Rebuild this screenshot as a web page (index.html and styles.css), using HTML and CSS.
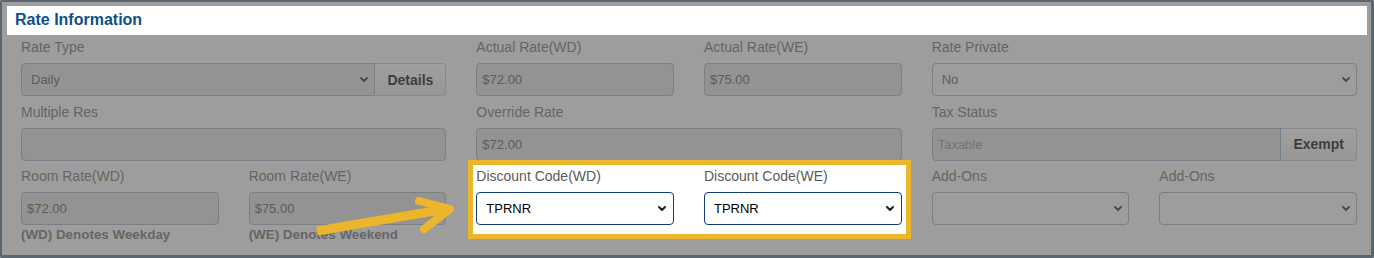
FILE: index.html
```html
<!DOCTYPE html>
<html>
<head>
<meta charset="utf-8">
<link rel="stylesheet" href="styles.css">
</head>
<body>
<div class="frame">
  <div class="header">Rate Information</div>
  <div class="grid">
    <div class="field span2">
      <div class="lbl">Rate Type</div>
      <div class="group">
        <div class="control select dim grow left"><span class="val">Daily</span><svg class="chev" width="8" height="5" viewBox="0 0 8 5"><polyline points="1,1 4,4 7,1" /></svg></div>
        <div class="btn">Details</div>
      </div>
    </div>
    <div class="field">
      <div class="lbl">Actual Rate(WD)</div>
      <div class="control dim tight"><span class="val">$72.00</span></div>
    </div>
    <div class="field">
      <div class="lbl">Actual Rate(WE)</div>
      <div class="control dim tight"><span class="val">$75.00</span></div>
    </div>
    <div class="field span2">
      <div class="lbl">Rate Private</div>
      <div class="control select"><span class="val">No</span><svg class="chev" width="8" height="5" viewBox="0 0 8 5"><polyline points="1,1 4,4 7,1" /></svg></div>
    </div>

    <div class="field span2">
      <div class="lbl">Multiple Res</div>
      <div class="control dim"></div>
    </div>
    <div class="field span2">
      <div class="lbl">Override Rate</div>
      <div class="control dim tight"><span class="val">$72.00</span></div>
    </div>
    <div class="field span2">
      <div class="lbl">Tax Status</div>
      <div class="group">
        <div class="control dim grow left tight"><span class="val light">Taxable</span></div>
        <div class="btn">Exempt</div>
      </div>
    </div>

    <div class="field">
      <div class="lbl">Room Rate(WD)</div>
      <div class="control dim tight"><span class="val">$72.00</span></div>
      <div class="note">(WD) Denotes Weekday</div>
    </div>
    <div class="field">
      <div class="lbl">Room Rate(WE)</div>
      <div class="control dim tight"><span class="val">$75.00</span></div>
      <div class="note">(WE) Denotes Weekend</div>
    </div>
    <div class="highlight">
      <div class="field">
        <div class="lbl hl">Discount Code(WD)</div>
        <div class="control select active"><span class="val">TPRNR</span><svg class="chev" width="8" height="5" viewBox="0 0 8 5"><polyline points="1,1 4,4 7,1" /></svg></div>
      </div>
      <div class="field">
        <div class="lbl hl">Discount Code(WE)</div>
        <div class="control select active"><span class="val">TPRNR</span><svg class="chev" width="8" height="5" viewBox="0 0 8 5"><polyline points="1,1 4,4 7,1" /></svg></div>
      </div>
    </div>
    <div class="field">
      <div class="lbl">Add-Ons</div>
      <div class="control select"><span class="val"></span><svg class="chev" width="8" height="5" viewBox="0 0 8 5"><polyline points="1,1 4,4 7,1" /></svg></div>
    </div>
    <div class="field">
      <div class="lbl">Add-Ons</div>
      <div class="control select"><span class="val"></span><svg class="chev" width="8" height="5" viewBox="0 0 8 5"><polyline points="1,1 4,4 7,1" /></svg></div>
    </div>
  </div>
  <svg class="arrow" width="150" height="45" viewBox="0 0 150 45">
    <line class="shaft" x1="7" y1="38" x2="136" y2="16" />
    <polyline class="head" points="109,8 140,16 114,36" />
  </svg>
</div>
</body>
</html>
```

FILE: styles.css
```css
* { box-sizing: border-box; }

html, body {
  margin: 0;
  padding: 0;
}

body {
  width: 1374px;
  height: 258px;
  font-family: "Liberation Sans", Arial, sans-serif;
  background: #9d9d9d;
}

.frame {
  position: relative;
  width: 1374px;
  height: 258px;
  border-style: solid;
  border-color: #5b6770;
  border-width: 2px 3px 3px 2px;
  border-radius: 2px;
  background: #9d9d9d;
  padding: 4px 4px 0 5px;
}

.header {
  height: 29px;
  background: #ffffff;
  color: #0e4f8c;
  font-weight: bold;
  font-size: 16px;
  line-height: 28px;
  padding-left: 8px;
}

.grid {
  display: grid;
  grid-template-columns: repeat(6, minmax(0, 1fr));
  column-gap: 30px;
  row-gap: 7.5px;
  padding: 4px 10px 0 14px;
  align-items: start;
}

.span2 { grid-column: span 2; }

.field {
  display: flex;
  flex-direction: column;
  min-width: 0;
}

.lbl {
  font-size: 14px;
  line-height: 17px;
  color: #656565;
  margin-bottom: 7px;
  white-space: nowrap;
}

.lbl.hl { color: #5a5a5a; }

.group {
  display: flex;
}

.grow { flex: 1 1 auto; min-width: 0; }

.control {
  height: 33px;
  border: 1px solid #7b7f88;
  border-radius: 4px;
  background: #9d9d9d;
  display: flex;
  align-items: center;
  padding: 0 9px;
  font-size: 13px;
  color: #5c5c5c;
}

.control.tight { padding-left: 5px; }

.control.dim { background: #939393; }

.control.left {
  border-top-right-radius: 0;
  border-bottom-right-radius: 0;
}

.val {
  flex: 1 1 auto;
  white-space: nowrap;
}

.val.light { color: #747474; }

.select { padding-right: 6px; }

.chev {
  flex: 0 0 auto;
  fill: none;
  stroke: #4a4a4a;
  stroke-width: 1.8;
  stroke-linecap: round;
  stroke-linejoin: round;
}

.btn {
  height: 33px;
  flex: 0 0 auto;
  border: 1px solid #878a8f;
  border-left: none;
  border-radius: 0 4px 4px 0;
  background: linear-gradient(#a0a0a0, #969696);
  font-size: 14px;
  font-weight: bold;
  color: #3e3e3e;
  display: flex;
  align-items: center;
  padding: 0 12px 0 12px;
}

.note {
  margin-top: 2px;
  font-size: 13.4px;
  line-height: 15px;
  font-weight: bold;
  color: #666666;
  white-space: nowrap;
}

.highlight {
  grid-column: span 2;
  margin: -8px -9px -14px -8px;
  border: 5px solid #ebb62c;
  background: #ffffff;
  padding: 3px 4px 9px 3px;
  display: grid;
  grid-template-columns: repeat(2, minmax(0, 1fr));
  column-gap: 30px;
}

.control.active {
  background: #ffffff;
  border-color: #0d3c79;
  color: #000000;
  padding-left: 9px;
  padding-right: 7px;
}

.control.active .chev { stroke: #111111; }

.arrow {
  position: absolute;
  left: 308px;
  top: 191px;
  overflow: visible;
  pointer-events: none;
}

.shaft {
  stroke: #ebb62c;
  stroke-width: 9;
  stroke-linecap: butt;
}

.head {
  fill: none;
  stroke: #ebb62c;
  stroke-width: 8;
  stroke-linecap: round;
  stroke-linejoin: round;
}
```
